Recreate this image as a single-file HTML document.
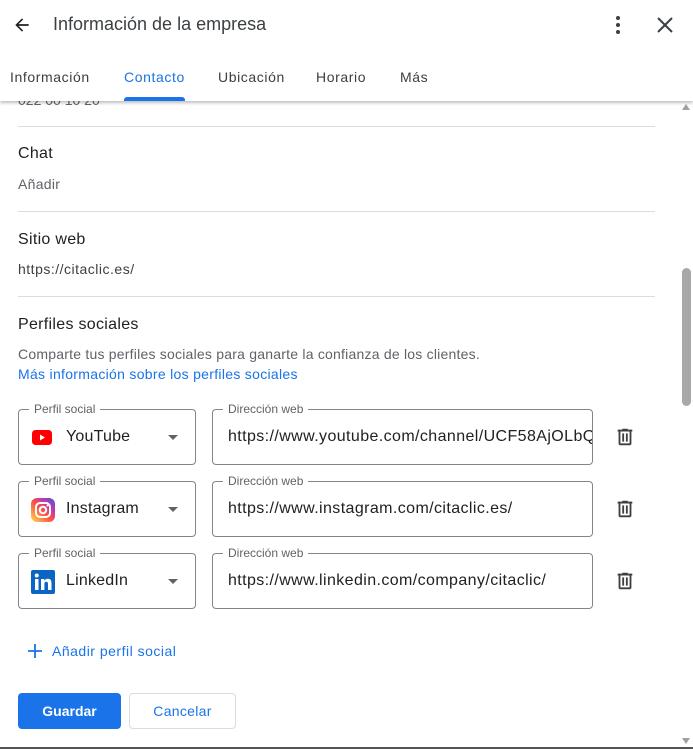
<!DOCTYPE html>
<html><head><meta charset="utf-8"><style>
*{box-sizing:border-box;margin:0;padding:0}
body{width:693px;height:749px;overflow:hidden;background:#fff;font-family:"Liberation Sans",Arial,sans-serif;color:#202124;position:relative}
.a{position:absolute;white-space:nowrap}
.hdr{position:absolute;left:0;top:0;width:693px;height:101px;background:#fff;box-shadow:0 2px 3px rgba(0,0,0,.25);z-index:2}
.tab{font-size:14px;letter-spacing:.6px}
.sep{position:absolute;left:18px;width:637px;height:1px;background:#dadce0}
.box{position:absolute;border:1px solid #80868b;border-radius:4px;height:56px}
.lbl{position:absolute;top:-8px;left:10px;background:#fff;padding:0 5px;font-size:12px;color:#5f6368}
.val{position:absolute;top:18px;font-size:16px;color:#202124;letter-spacing:.4px}
.clip{position:absolute;left:0;top:0;right:0;bottom:0;overflow:hidden;border-radius:4px}
.caret{position:absolute;right:17px;top:25px;width:0;height:0;border-left:5px solid transparent;border-right:5px solid transparent;border-top:5px solid #5f6368}
.trash{position:absolute;left:614px}
</style></head><body>
<div class="hdr">
 <svg class="a" style="left:12px;top:15px" width="20" height="20" viewBox="0 0 24 24"><path d="M20 11H7.8l5.6-5.6L12 4l-8 8 8 8 1.4-1.4L7.8 13H20z" fill="#202124"/></svg>
 <div class="a" style="left:53px;top:14px;font-size:18px;color:#3c4043">Información de la empresa</div>
 <svg class="a" style="left:608px;top:14px" width="20" height="22" viewBox="0 0 20 22"><circle cx="10" cy="4" r="2" fill="#3c4043"/><circle cx="10" cy="11" r="2" fill="#3c4043"/><circle cx="10" cy="18" r="2" fill="#3c4043"/></svg>
 <svg class="a" style="left:656px;top:16px" width="18" height="18" viewBox="0 0 18 18"><path d="M2 2L16 16M16 2L2 16" stroke="#3c4043" stroke-width="2"/></svg>
 <div class="a tab" style="left:10px;top:69px;color:#3c4043">Información</div>
 <div class="a tab" style="left:124px;top:69px;color:#1a73e8">Contacto</div>
 <div class="a tab" style="left:218px;top:69px;color:#3c4043">Ubicación</div>
 <div class="a tab" style="left:316px;top:69px;color:#3c4043">Horario</div>
 <div class="a tab" style="left:400px;top:69px;color:#3c4043">Más</div>
 <div class="a" style="left:124px;top:97px;width:61px;height:4px;background:#1a73e8;border-radius:3px 3px 0 0"></div>
</div>
<div class="a" style="left:18px;top:92px;font-size:14px;color:#5f6368">022 00 10 20</div>
<div class="sep" style="top:126px"></div>
<div class="a" style="left:18px;top:145px;font-size:16px;letter-spacing:.3px">Chat</div>
<div class="a" style="left:18px;top:176px;font-size:14px;color:#5f6368;letter-spacing:.3px">Añadir</div>
<div class="sep" style="top:211px"></div>
<div class="a" style="left:18px;top:231px;font-size:16px;letter-spacing:.3px">Sitio web</div>
<div class="a" style="left:18px;top:261px;font-size:14px;color:#3c4043;letter-spacing:.5px">https://citaclic.es/</div>
<div class="sep" style="top:296px"></div>
<div class="a" style="left:18px;top:316px;font-size:16px;letter-spacing:.3px">Perfiles sociales</div>
<div class="a" style="left:18px;top:346px;font-size:14px;color:#5f6368;letter-spacing:.22px">Comparte tus perfiles sociales para ganarte la confianza de los clientes.</div>
<div class="a" style="left:18px;top:366px;font-size:14px;color:#1a73e8;letter-spacing:.3px">Más información sobre los perfiles sociales</div>

<div class="box" style="left:18px;top:409px;width:178px"><div class="lbl">Perfil social</div>
 <svg class="a" style="left:13px;top:20px" width="20" height="15" viewBox="0 0 20 15"><rect width="20" height="15" rx="3.5" fill="#f00"/><path d="M8 4.5v6l5-3z" fill="#fff"/></svg>
 <div class="val" style="left:47px;letter-spacing:.2px">YouTube</div><div class="caret"></div></div>
<div class="box" style="left:212px;top:409px;width:381px"><div class="clip"><div class="val" style="left:15px">https://www.youtube.com/channel/UCF58AjOLbQ</div></div><div class="lbl">Dirección web</div></div>
<svg class="a trash" style="top:426px" width="22" height="22" viewBox="0 0 24 24"><path d="M15 4V3H9v1H4v2h1v13a2 2 0 002 2h10a2 2 0 002-2V6h1V4zm2 15H7V6h10zM9 8h2v9H9zm4 0h2v9h-2z" fill="#3c4043"/></svg>

<div class="box" style="left:18px;top:481px;width:178px"><div class="lbl">Perfil social</div>
 <svg class="a" style="left:12px;top:16px" width="24" height="24" viewBox="0 0 24 24"><defs><linearGradient id="ig" x1="0" y1="1" x2="1" y2="0"><stop offset="0" stop-color="#fd5"/><stop offset=".45" stop-color="#ff543e"/><stop offset=".7" stop-color="#c837ab"/><stop offset="1" stop-color="#3f5bd6"/></linearGradient></defs><rect width="24" height="24" rx="6" fill="url(#ig)"/><rect x="5" y="5" width="14" height="14" rx="4" fill="none" stroke="#fff" stroke-width="2"/><circle cx="12" cy="12" r="3.2" fill="none" stroke="#fff" stroke-width="2"/><circle cx="16.5" cy="7.5" r="1" fill="#fff"/></svg>
 <div class="val" style="left:47px;letter-spacing:.2px">Instagram</div><div class="caret"></div></div>
<div class="box" style="left:212px;top:481px;width:381px"><div class="lbl">Dirección web</div><div class="val" style="left:15px">https://www.instagram.com/citaclic.es/</div></div>
<svg class="a trash" style="top:498px" width="22" height="22" viewBox="0 0 24 24"><path d="M15 4V3H9v1H4v2h1v13a2 2 0 002 2h10a2 2 0 002-2V6h1V4zm2 15H7V6h10zM9 8h2v9H9zm4 0h2v9h-2z" fill="#3c4043"/></svg>

<div class="box" style="left:18px;top:553px;width:178px"><div class="lbl">Perfil social</div>
 <svg class="a" style="left:12px;top:16px" width="24" height="24" viewBox="0 0 24 24"><rect width="24" height="24" rx="2" fill="#0a66c2"/><rect x="4" y="9" width="3.5" height="11" fill="#fff"/><circle cx="5.75" cy="5.5" r="2" fill="#fff"/><path d="M10 9h3.3v1.6c.6-1 1.8-1.9 3.6-1.9 3 0 3.6 2 3.6 4.6V20H17v-5.6c0-1.4-.2-2.6-1.7-2.6s-1.9 1.1-1.9 2.5V20H10z" fill="#fff"/></svg>
 <div class="val" style="left:47px;letter-spacing:.2px">LinkedIn</div><div class="caret"></div></div>
<div class="box" style="left:212px;top:553px;width:381px"><div class="lbl">Dirección web</div><div class="val" style="left:15px">https://www.linkedin.com/company/citaclic/</div></div>
<svg class="a trash" style="top:570px" width="22" height="22" viewBox="0 0 24 24"><path d="M15 4V3H9v1H4v2h1v13a2 2 0 002 2h10a2 2 0 002-2V6h1V4zm2 15H7V6h10zM9 8h2v9H9zm4 0h2v9h-2z" fill="#3c4043"/></svg>

<svg class="a" style="left:27px;top:643px" width="16" height="16" viewBox="0 0 16 16"><path d="M8 1v14M1 8h14" stroke="#1a73e8" stroke-width="1.8"/></svg>
<div class="a" style="left:52px;top:643px;font-size:14px;color:#1a73e8;letter-spacing:.5px">Añadir perfil social</div>
<div class="a" style="left:18px;top:693px;width:103px;height:36px;background:#1a73e8;border-radius:4px;color:#fff;font-size:14px;font-weight:bold;text-align:center;line-height:36px">Guardar</div>
<div class="a" style="left:129px;top:693px;width:107px;height:36px;border:1px solid #dadce0;border-radius:4px;color:#1a73e8;font-size:14px;text-align:center;line-height:34px;letter-spacing:.3px">Cancelar</div>

<div class="a" style="left:680px;top:101px;width:13px;height:646px;background:#fff"></div>
<div class="a" style="left:682px;top:104px;width:0;height:0;border-left:4px solid transparent;border-right:4px solid transparent;border-bottom:6px solid #a0a0a0"></div>
<div class="a" style="left:682px;top:268px;width:9px;height:138px;background:#a8a8a8;border-radius:5px"></div>
<div class="a" style="left:682px;top:738px;width:0;height:0;border-left:4px solid transparent;border-right:4px solid transparent;border-top:6px solid #a0a0a0"></div>
<div class="a" style="left:0;top:747px;width:693px;height:2px;background:#555"></div>
</body></html>
